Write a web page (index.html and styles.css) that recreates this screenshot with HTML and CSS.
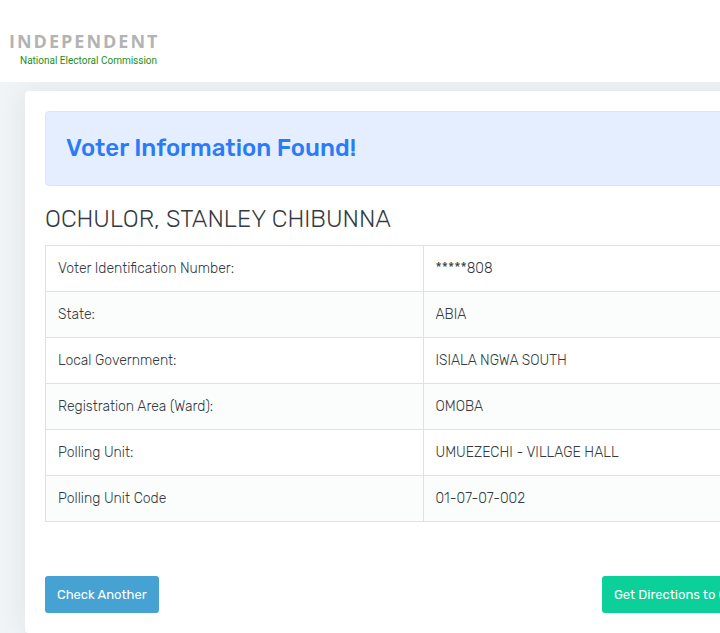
FILE: index.html
```html
<!DOCTYPE html>
<html lang="en">
  <head>
    <meta charset="UTF-8" />
    <meta name="viewport" content="width=device-width, initial-scale=1.0" />
    <title>Voter Information</title>
    <link rel="stylesheet" href="styles.css">
  </head>
  <body>
    <header class="header">
      <a href="#" class="logo">
        <span class="logo-name">INDEPENDENT</span>
        <span class="logo-sub">National Electoral Commission</span>
      </a>
    </header>
    <main class="page">
      <div class="card">
        <div class="alert">
          <h1>Voter Information Found!</h1>
        </div>
        <h2 class="voter-name">OCHULOR, STANLEY CHIBUNNA</h2>
        <table class="info">
          <tbody>
            <tr>
              <th scope="row">Voter Identification Number:</th>
              <td>*****808</td>
            </tr>
            <tr>
              <th scope="row">State:</th>
              <td>ABIA</td>
            </tr>
            <tr>
              <th scope="row">Local Government:</th>
              <td>ISIALA NGWA SOUTH</td>
            </tr>
            <tr>
              <th scope="row">Registration Area (Ward):</th>
              <td>OMOBA</td>
            </tr>
            <tr>
              <th scope="row">Polling Unit:</th>
              <td>UMUEZECHI - VILLAGE HALL</td>
            </tr>
            <tr>
              <th scope="row">Polling Unit Code</th>
              <td>01-07-07-002</td>
            </tr>
          </tbody>
        </table>
        <div class="actions">
          <button type="button" class="btn btn-info">Check Another</button>
          <button type="button" class="btn btn-success">Get Directions to Google Map</button>
        </div>
      </div>
    </main>
  </body>
</html>
```

FILE: styles.css
```css
* {
  box-sizing: border-box;
  padding: 0;
  margin: 0;
}
body {
  background-color: #f0f4f7;
  color: #343a40;
  font-family: Rubik, Roboto, "Liberation Sans", sans-serif;
  font-size: 14px;
  font-weight: 300;
  line-height: 21px;
  overflow-x: hidden;
}
.header {
  position: relative;
  background-color: #fff;
  padding: 31px 9px 13px;
}
.logo {
  display: block;
  text-decoration: none;
}
.logo-name {
  display: block;
  color: #b3b3b3;
  font-family: "Open Sans", sans-serif;
  font-size: 18px;
  font-weight: 700;
  line-height: 21px;
  letter-spacing: 2px;
}
.logo-sub {
  display: block;
  color: #1c8f1c;
  font-family: Roboto, sans-serif;
  font-size: 10px;
  font-weight: 400;
  line-height: 17px;
  padding-left: 11px;
}
.page {
  min-width: 846px;
  padding: 9px 25px 0;
  overflow: hidden;
}
.card {
  background-color: #fff;
  border-radius: 4px;
  box-shadow: 0 0 30px rgba(33, 37, 41, 0.08);
  padding: 20px;
}
.alert {
  background-color: #e5eefe;
  border: 1px solid #d8e5fc;
  border-radius: 4px;
  padding: 20px;
  margin-bottom: 18px;
}
.alert h1 {
  color: #2c7bf6;
  font-size: 24px;
  font-weight: 500;
  line-height: 33px;
}
.voter-name {
  font-size: 24px;
  font-weight: 300;
  line-height: 30px;
  margin-bottom: 11px;
}
.info {
  width: 100%;
  table-layout: fixed;
  border-collapse: collapse;
  margin-bottom: 54px;
}
.info th,
.info td {
  border: 1px solid #dee2e6;
  font-weight: 300;
  text-align: left;
  padding: 12px;
}
.info tr:nth-child(even) {
  background-color: #fbfdfc;
}
.actions {
  display: flex;
  justify-content: space-between;
}
.btn {
  border: 0;
  border-radius: 3px;
  color: #fff;
  font-family: inherit;
  font-size: 13px;
  font-weight: 400;
  line-height: 21px;
  padding: 8px 12px;
  cursor: pointer;
}
.btn-info {
  background-color: #45a2d3;
}
.btn-success {
  background-color: #0bd09a;
}
```
